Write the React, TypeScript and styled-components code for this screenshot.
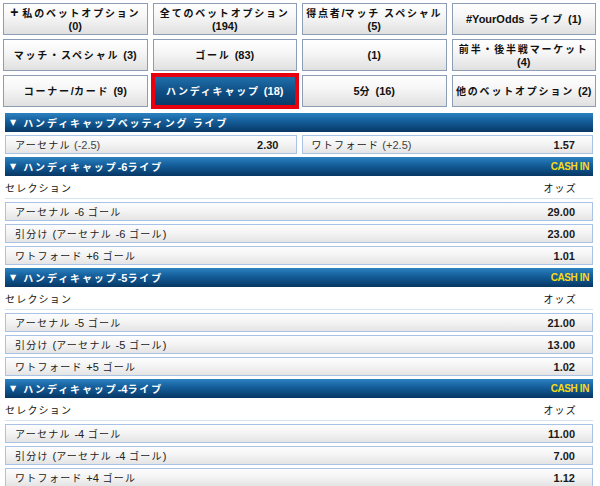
import React from 'react';
import styled, { createGlobalStyle, css } from 'styled-components';

const GlobalStyle = createGlobalStyle`
  html, body { margin: 0; padding: 0; background: #fff; }
  body {
    font-family: "Liberation Sans", "Noto Sans CJK JP", Arial, sans-serif;
    font-size: 11px;
    color: #222;
  }
`;

const Page = styled.div`
  width: 600px;
  box-sizing: border-box;
  padding: 3px 4px 0 3px;
`;

const TabGrid = styled.div`
  display: grid;
  grid-template-columns: repeat(4, 1fr);
  column-gap: 5px;
  row-gap: 4px;
`;

const Tab = styled.div<{ $active?: boolean }>`
  height: 32px;
  box-sizing: border-box;
  border: 1px solid #8e9db6;
  background: linear-gradient(#ffffff, #f5f5f5 45%, #e0e0e0);
  display: flex;
  flex-direction: column;
  align-items: center;
  justify-content: center;
  font-weight: bold;
  font-size: 11px;
  line-height: 13px;
  text-align: center;
  color: #111;
  ${(p) =>
    p.$active &&
    css`
      border: 2px solid #e8000f;
      box-shadow: 0 0 0 2px #e8000f;
      background: linear-gradient(#2070ab, #0e4c82 55%, #0a3b69);
      color: #fff;
    `}
`;

const Jp = styled.span<{ $sp: number; $fs: number }>`
  font-family: "Noto Sans CJK JP", sans-serif;
  letter-spacing: ${(p) => p.$sp}px;
  font-size: ${(p) => p.$fs}px;
`;

const Plus = styled.span`
  font-size: 14px;
  font-weight: bold;
  margin-right: 4px;
`;

const Sections = styled.div`
  display: flex;
  flex-direction: column;
  gap: 3px;
  padding: 6px 3px 0 2px;
`;

const Section = styled.div`
  display: flex;
  flex-direction: column;
`;

const Header = styled.div`
  height: 19px;
  box-sizing: border-box;
  display: flex;
  align-items: center;
  padding: 0 4px 0 5px;
  background: linear-gradient(#2c82c0, #15609d 40%, #0b4578 80%, #083763);
  color: #fff;
  font-weight: bold;
  font-size: 11px;
`;

const Arrow = styled.span`
  font-size: 8px;
  margin-right: 7px;
  font-family: "DejaVu Sans", sans-serif;
`;

const CashIn = styled.span`
  margin-left: auto;
  color: #f7dc12;
  font-family: "Liberation Sans Narrow", "Liberation Sans", sans-serif;
  font-weight: bold;
  font-size: 10px;
  letter-spacing: -0.4px;
`;

const PairRow = styled.div`
  display: grid;
  grid-template-columns: 1fr 1fr;
  column-gap: 5px;
  margin-top: 3px;
`;

const OddsRow = styled.div`
  height: 19px;
  box-sizing: border-box;
  border: 1px solid #a9c3e6;
  background: linear-gradient(#fdfdfd, #f3f3f3 50%, #e4e4e4);
  display: flex;
  align-items: center;
  justify-content: space-between;
  padding: 0 17px 0 9px;
  font-size: 11px;
  color: #222;
`;

const Sub = styled.span`
  color: #444;
`;

const Odds = styled.span`
  font-weight: bold;
  font-size: 11px;
  color: #1a1a1a;
`;

const LabelRow = styled.div`
  height: 22px;
  display: flex;
  align-items: center;
  justify-content: space-between;
  padding: 0 16px 0 0;
  border-bottom: 1px solid #d4e4f3;
  font-size: 11px;
  color: #111;
`;

const RowList = styled.div`
  display: flex;
  flex-direction: column;
  gap: 3px;
  margin-top: 3px;
`;

const CJK = /([\u3000-\u30ff\u4e00-\u9fff\uff00-\uffef ]*[\u3000-\u30ff\u4e00-\u9fff\uff00-\uffef][\u3000-\u30ff\u4e00-\u9fff\uff00-\uffef ]*)/;

function Txt({ text, sp = 1.7, fs = 10 }: { text: string; sp?: number; fs?: number }) {
  const parts = text.split(CJK);
  return (
    <>
      {parts.map((p, i) =>
        i % 2 === 1 ? (
          <Jp key={i} $sp={sp} $fs={fs}>
            {p}
          </Jp>
        ) : (
          <React.Fragment key={i}>{p}</React.Fragment>
        )
      )}
    </>
  );
}

type TabDef = { lines: string[]; active?: boolean; plus?: boolean };

const tabs: TabDef[] = [
  { lines: ['私のベットオプション', '(0)'], plus: true },
  { lines: ['全てのベットオプション', '(194)'] },
  { lines: ['得点者/マッチ スペシャル', '(5)'] },
  { lines: ['#YourOdds ライブ (1)'] },
  { lines: ['マッチ・スペシャル (3)'] },
  { lines: ['ゴール (83)'] },
  { lines: ['(1)'] },
  { lines: ['前半・後半戦マーケット', '(4)'] },
  { lines: ['コーナー/カード (9)'] },
  { lines: ['ハンディキャップ (18)'], active: true },
  { lines: ['5分 (16)'] },
  { lines: ['他のベットオプション (2)'] },
];

const handicaps = [
  {
    title: 'ハンディキャップ -6ライブ',
    rows: [
      ['アーセナル -6 ゴール', '29.00'],
      ['引分け (アーセナル -6 ゴール)', '23.00'],
      ['ワトフォード +6 ゴール', '1.01'],
    ],
  },
  {
    title: 'ハンディキャップ -5ライブ',
    rows: [
      ['アーセナル -5 ゴール', '21.00'],
      ['引分け (アーセナル -5 ゴール)', '13.00'],
      ['ワトフォード +5 ゴール', '1.02'],
    ],
  },
  {
    title: 'ハンディキャップ -4ライブ',
    rows: [
      ['アーセナル -4 ゴール', '11.00'],
      ['引分け (アーセナル -4 ゴール)', '7.00'],
      ['ワトフォード +4 ゴール', '1.12'],
    ],
  },
];

export default function App() {
  return (
    <>
      <GlobalStyle />
      <Page>
        <TabGrid>
          {tabs.map((t, i) => (
            <Tab key={i} $active={t.active}>
              {t.lines.map((l, j) => (
                <div key={j}>
                  {t.plus && j === 0 && <Plus>+</Plus>}
                  <Txt text={l} sp={1.8} />
                </div>
              ))}
            </Tab>
          ))}
        </TabGrid>
        <Sections>
          <Section>
            <Header>
              <Arrow>▼</Arrow>
              <Txt text="ハンディキャップベッティング ライブ" sp={1.9} />
            </Header>
            <PairRow>
              <OddsRow>
                <span>
                  <Txt text="アーセナル" sp={1.3} />
                  <Sub> (-2.5)</Sub>
                </span>
                <Odds>2.30</Odds>
              </OddsRow>
              <OddsRow>
                <span>
                  <Txt text="ワトフォード" sp={1.3} />
                  <Sub> (+2.5)</Sub>
                </span>
                <Odds>1.57</Odds>
              </OddsRow>
            </PairRow>
          </Section>
          {handicaps.map((h, i) => (
            <Section key={i}>
              <Header>
                <Arrow>▼</Arrow>
                <Txt text={h.title} sp={1.9} />
                <CashIn>CASH IN</CashIn>
              </Header>
              <LabelRow>
                <Txt text="セレクション" sp={1.2} />
                <Txt text="オッズ" sp={1.2} />
              </LabelRow>
              <RowList>
                {h.rows.map(([name, odds], j) => (
                  <OddsRow key={j}>
                    <span>
                      <Txt text={name} sp={1.3} />
                    </span>
                    <Odds>{odds}</Odds>
                  </OddsRow>
                ))}
              </RowList>
            </Section>
          ))}
        </Sections>
      </Page>
    </>
  );
}
